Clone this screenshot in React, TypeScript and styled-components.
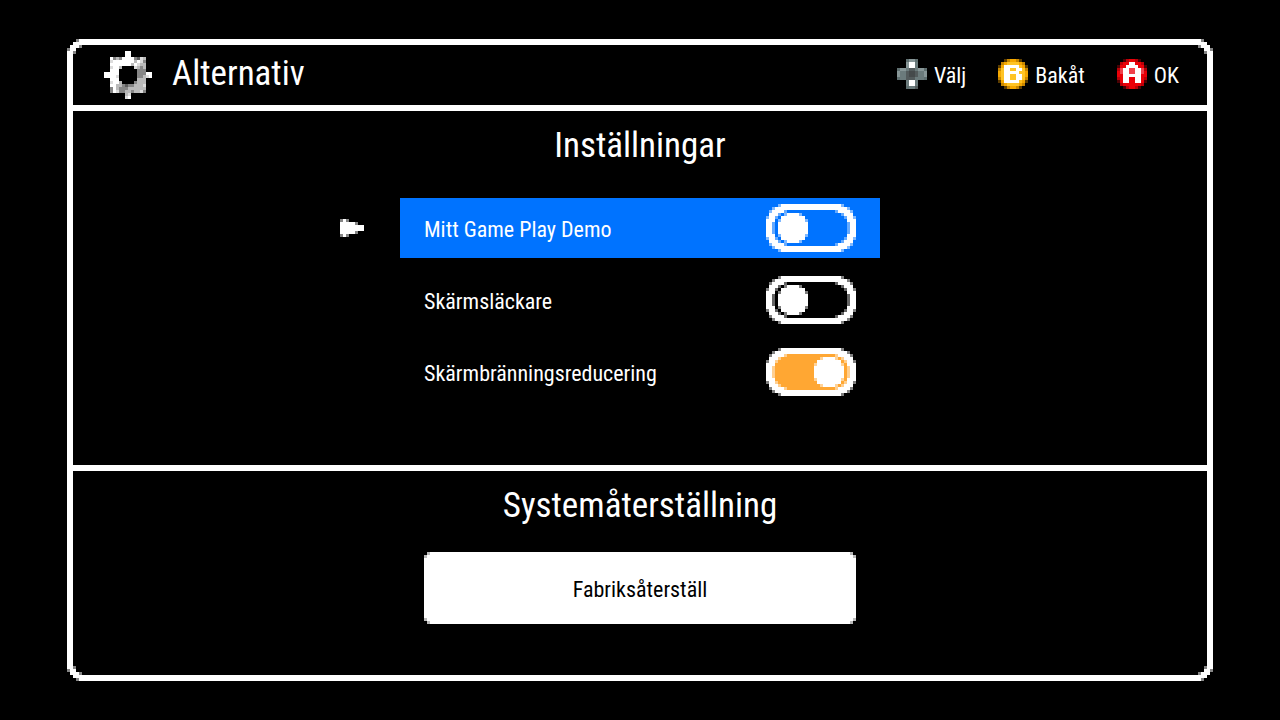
import React, { useState } from "react";
import styled, { createGlobalStyle } from "styled-components";

const GlobalStyle = createGlobalStyle`
  * {
    box-sizing: border-box;
  }
  body {
    margin: 0;
    background: #000;
    color: #fff;
    font-family: "Roboto Condensed", Roboto, sans-serif;
    font-size: 22px;
    line-height: 30px;
  }
`;

const CELL = 3;

type Palette = Record<string, string>;

const Art = styled.svg`
  display: block;
  flex: none;
`;

interface PixelArtProps {
  rows: string[];
  palette: Palette;
  className?: string;
}

function PixelArt({ rows, palette, className }: PixelArtProps) {
  const width = rows[0].length;
  return (
    <Art
      className={className}
      width={width * CELL}
      height={rows.length * CELL}
      viewBox={`0 0 ${width} ${rows.length}`}
      shapeRendering="crispEdges"
      aria-hidden="true"
    >
      {rows.flatMap((row, y) =>
        [...row].map((key, x) =>
          palette[key] ? (
            <rect key={`${x}-${y}`} x={x} y={y} width={1} height={1} fill={palette[key]} />
          ) : null
        )
      )}
    </Art>
  );
}

const mono: Palette = {
  W: "#fff",
  L: "#dcdcdc",
  G: "#bababa",
  g: "#868686",
  D: "#5c5c5c",
  k: "#000",
};

const gearRows = [
  ".......WW.......",
  ".......WW.......",
  "..WgGgWWWWgDLG..",
  "..LWWWWWWWGWLg..",
  "..WWWWWWWGWLGG..",
  "..LWWG....LGgG..",
  "..WWW......ggg..",
  "WWWWW......gggWW",
  "WWWWL......ggGLW",
  "..WWW......GGG..",
  "..LWWG....gGGG..",
  "..WWGGgDggGGGL..",
  "..gWGgggGGGGGG..",
  "..gWLggGGgGGLg..",
  ".......GL.......",
  ".......LW.......",
];

const arrowRows = ["gWg.....", "WWWWWg..", "WWWWWWWW", "WWWWWWWW", "WWWWWg..", "gWg....."];

const cornerRows = ["kkkgW", "kkWWW", "kWWWg", "gWWkk", "WWgkk"];

const buttonCornerRows = ["kG", "GW"];

const padRows = [
  "...abba...",
  "...bWWc...",
  "...bWWc...",
  "abbcddcbba",
  "bccdeedccb",
  "bccdeedccb",
  "accdddccca",
  "...cWWc...",
  "...cWWc...",
  "...accd...",
];

const padPalette: Palette = {
  a: "#5f6f70",
  b: "#879697",
  c: "#6b7b7c",
  d: "#535b5c",
  e: "#454a4b",
  W: "#fff",
};

const backRows = [
  "..dmoomd..",
  ".moyyyyom.",
  "doWWWWWyod",
  "myWWyyWWym",
  "oyWWWWWyyo",
  "oyWWyyWWyo",
  "myWWyyWWym",
  "doWWWWWyod",
  ".moyyyyom.",
  "..dmoomd..",
];

const backPalette: Palette = {
  d: "#5c3d00",
  m: "#c88700",
  o: "#f5a800",
  y: "#ffc425",
  W: "#fff",
};

const okRows = [
  "..dmrrmd..",
  ".mrrWWrrm.",
  "drrWWWWrrd",
  "mpWWppWWpm",
  "rpWWppWWpr",
  "rrWWWWWWrr",
  "mrWWrrWWrm",
  "drWWrrWWrd",
  ".mrrrrrrm.",
  "..dmrrmd..",
];

const okPalette: Palette = {
  d: "#4a0004",
  m: "#b80008",
  r: "#ea0008",
  p: "#f0414b",
  W: "#fff",
};

const trackRows = [
  "....gWWWWWWWWWWWWWWWWWWWWg....",
  "..gWWWWWWWWWWWWWWWWWWWWWWWWg..",
  ".gWWWWhffffffffffffffffhWWWWg.",
  ".WWWhffffffffffffffffffffhWWW.",
  "gWWhffffffffffffffffffffffhWWg",
  "WWWffffffffffffffffffffffffWWW",
  "WWhffffffffffffffffffffffffhWW",
  "WWhffffffffffffffffffffffffhWW",
  "WWhffffffffffffffffffffffffhWW",
  "WWhffffffffffffffffffffffffhWW",
  "WWWffffffffffffffffffffffffWWW",
  "gWWhffffffffffffffffffffffhWWg",
  ".WWWhffffffffffffffffffffhWWW.",
  ".gWWWWhffffffffffffffffhWWWWg.",
  "..gWWWWWWWWWWWWWWWWWWWWWWWWg..",
  "....gWWWWWWWWWWWWWWWWWWWWg....",
];

const knobRows = [
  "..gWWWWg..",
  ".WWWWWWWW.",
  "gWWWWWWWWg",
  "WWWWWWWWWW",
  "WWWWWWWWWW",
  "WWWWWWWWWW",
  "WWWWWWWWWW",
  "gWWWWWWWWg",
  ".WWWWWWWW.",
  "..gWWWWg..",
];

const Screen = styled.div`
  min-height: 100vh;
  padding: 39px 67px;
  display: flex;
`;

const Frame = styled.main`
  position: relative;
  flex: 1;
  display: flex;
  flex-direction: column;
  border: 6px solid #fff;
`;

const Corner = styled(PixelArt)<{ $right?: boolean; $bottom?: boolean; $outset?: number }>`
  position: absolute;
  ${(p) => (p.$right ? "right" : "left")}: -${(p) => p.$outset ?? 0}px;
  ${(p) => (p.$bottom ? "bottom" : "top")}: -${(p) => p.$outset ?? 0}px;
  transform: scale(${(p) => (p.$right ? -1 : 1)}, ${(p) => (p.$bottom ? -1 : 1)});
`;

function Corners({ rows, outset }: { rows: string[]; outset?: number }) {
  return (
    <>
      <Corner rows={rows} palette={mono} $outset={outset} />
      <Corner rows={rows} palette={mono} $outset={outset} $right />
      <Corner rows={rows} palette={mono} $outset={outset} $bottom />
      <Corner rows={rows} palette={mono} $outset={outset} $right $bottom />
    </>
  );
}

const Header = styled.header`
  height: 66px;
  padding: 0 28px 0 31px;
  display: flex;
  align-items: center;
  gap: 20px;
  border-bottom: 6px solid #fff;
`;

const Title = styled.h1`
  margin: 0 auto 0 0;
  padding-bottom: 2px;
  font-size: 35px;
  line-height: 42px;
  font-weight: 400;
`;

const Hints = styled.div`
  display: flex;
  gap: 32px;
  padding-top: 2px;
`;

const Hint = styled.button`
  display: flex;
  align-items: flex-start;
  gap: 7px;
  padding: 0;
  border: 0;
  background: none;
  color: inherit;
  font: inherit;
  line-height: 34px;
`;

const Section = styled.section<{ $grow?: boolean }>`
  display: flex;
  flex-direction: column;
  align-items: center;
  padding-top: 13px;
  flex: ${(p) => (p.$grow ? "1 0 auto" : "0 0 210px")};
  ${(p) => (p.$grow ? "" : "border-top: 6px solid #fff;")}
`;

const Heading = styled.h2`
  margin: 0;
  font-size: 35px;
  line-height: 44px;
  font-weight: 400;
`;

const List = styled.div`
  width: 480px;
  margin-top: 30px;
  display: flex;
  flex-direction: column;
  gap: 12px;
`;

const Option = styled.label<{ $active?: boolean }>`
  position: relative;
  height: 60px;
  padding: 0 24px;
  display: flex;
  align-items: center;
  justify-content: space-between;
  background: ${(p) => (p.$active ? "#0073ff" : "none")};
`;

const OptionName = styled.span`
  padding-top: 4px;
`;

const Pointer = styled(PixelArt)`
  position: absolute;
  left: -60px;
`;

const Switch = styled.span`
  position: relative;
`;

const SwitchInput = styled.input`
  position: absolute;
  inset: 0;
  width: 100%;
  height: 100%;
  margin: 0;
  opacity: 0;
`;

const Knob = styled(PixelArt)<{ $on: boolean }>`
  position: absolute;
  top: 9px;
  left: ${(p) => (p.$on ? 48 : 12)}px;
`;

const ResetButton = styled.button`
  position: relative;
  width: 432px;
  height: 72px;
  margin-top: 24px;
  padding: 4px 0 0;
  border: 0;
  background: #fff;
  color: #000;
  font: inherit;
`;

function Toggle({ on, onChange }: { on: boolean; onChange: () => void }) {
  const palette: Palette = on
    ? { W: "#fff", g: "#808080", h: "#ffcf90", f: "#ffa733" }
    : { W: "#fff", g: "rgba(255,255,255,.5)", h: "rgba(255,255,255,.4)" };
  return (
    <Switch>
      <PixelArt rows={trackRows} palette={palette} />
      <Knob $on={on} rows={knobRows} palette={{ W: "#fff", g: "rgba(255,255,255,.5)" }} />
      <SwitchInput type="checkbox" checked={on} onChange={onChange} />
    </Switch>
  );
}

export default function App() {
  const [options, setOptions] = useState([
    { name: "Mitt Game Play Demo", on: false },
    { name: "Skärmsläckare", on: false },
    { name: "Skärmbränningsreducering", on: true },
  ]);

  const toggle = (index: number) =>
    setOptions(options.map((o, i) => (i === index ? { ...o, on: !o.on } : o)));

  return (
    <>
      <GlobalStyle />
      <Screen>
        <Frame>
          <Corners rows={cornerRows} outset={6} />
          <Header>
            <PixelArt rows={gearRows} palette={mono} />
            <Title>Alternativ</Title>
            <Hints>
              <Hint>
                <PixelArt rows={padRows} palette={padPalette} />
                Välj
              </Hint>
              <Hint>
                <PixelArt rows={backRows} palette={backPalette} />
                Bakåt
              </Hint>
              <Hint>
                <PixelArt rows={okRows} palette={okPalette} />
                OK
              </Hint>
            </Hints>
          </Header>
          <Section $grow>
            <Heading>Inställningar</Heading>
            <List>
              {options.map((option, i) => (
                <Option key={option.name} $active={i === 0}>
                  {i === 0 && <Pointer rows={arrowRows} palette={mono} />}
                  <OptionName>{option.name}</OptionName>
                  <Toggle on={option.on} onChange={() => toggle(i)} />
                </Option>
              ))}
            </List>
          </Section>
          <Section>
            <Heading>Systemåterställning</Heading>
            <ResetButton>
              Fabriksåterställ
              <Corners rows={buttonCornerRows} />
            </ResetButton>
          </Section>
        </Frame>
      </Screen>
    </>
  );
}
